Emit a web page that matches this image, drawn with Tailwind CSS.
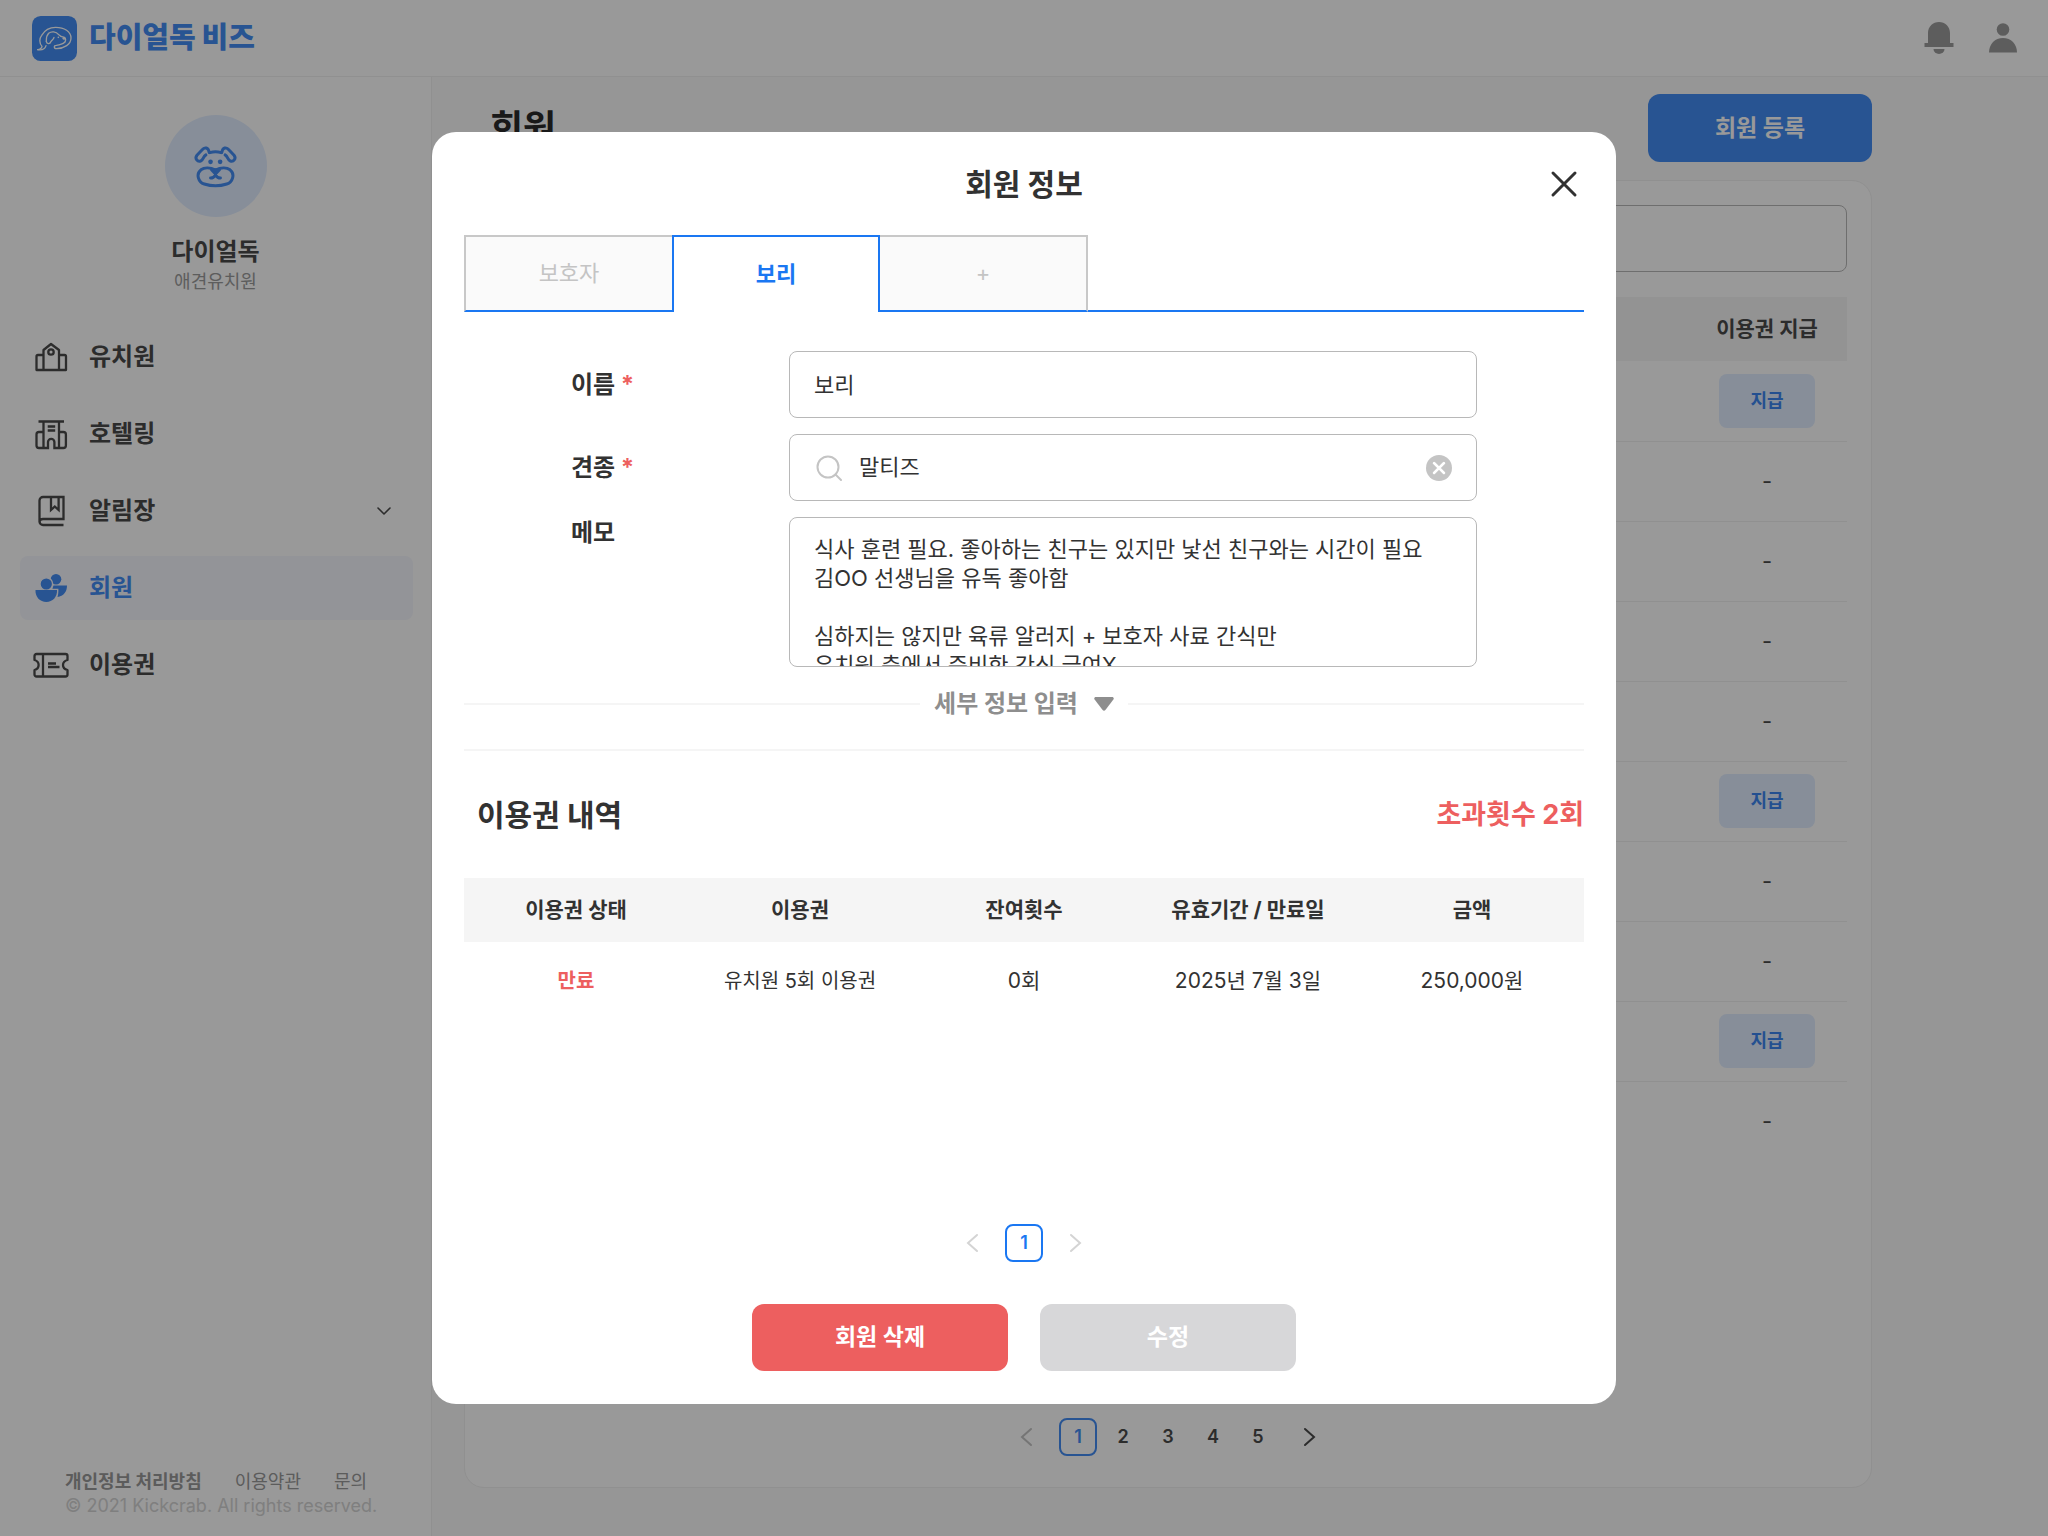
<!DOCTYPE html>
<html lang="ko">
  <head>
    <meta charset="UTF-8" />
    <meta name="viewport" content="width=device-width, initial-scale=1.0" />
    <title>다이얼독 비즈 - 회원</title>
    <script src="https://cdn.jsdelivr.net/npm/@tailwindcss/browser@4"></script>
  </head>
  <body
    class="min-h-screen flex flex-col bg-white text-[#4a4a4a] font-['Inter','Noto_Sans_CJK_KR',sans-serif]"
  >
    <!-- 상단 헤더 -->
    <header class="h-[77px] border-b border-[#f0f0f0] pl-8 pr-[29px] flex items-center justify-between">
      <a href="#" class="flex items-center gap-3">
        <svg class="size-[45px]" viewBox="0 0 135 135" fill="none">
          <rect width="135" height="135" rx="26" fill="#438cf3" />
          <g stroke="#fff" stroke-width="4" stroke-linecap="round" stroke-linejoin="round">
            <path d="M17 101c7-1 12-4 13-10-9-10-8-24-1-33C37 44 52 34 71 34c26 0 46 13 46 32 0 19-20 31-44 32-8 0-8-10 0-10 11-1 19-3 25-9" />
            <path d="M98 79c4-5 4-12-1-15-7-1-13-3-17-8-8-10-22-11-30-4-8 8-7 17-7 24" />
            <path d="M66 64c0 7-8 8-10 14-2 7-12 6-13-2M17 101c12 2 22-2 25-12" />
          </g>
          <circle cx="96" cy="67" r="4.500" fill="#fff" />
          <circle cx="79" cy="64" r="2.500" fill="#fff" />
        </svg>
        <span class="text-[29px] leading-8 font-black text-[#438cf3]">다이얼독 비즈</span>
      </a>
      <div class="flex items-center gap-8">
        <button type="button" aria-label="알림">
          <svg class="w-8 h-9" viewBox="0 0 32 36" fill="#9c9c9c">
            <path d="M5 23V13C5 6.500 10 2 16 2s11 4.500 11 11v10h3.500v4h-29v-4z" />
            <path d="M10.500 29h11a5.500 5 0 0 1-11 0z" />
          </svg>
        </button>
        <button type="button" aria-label="내 계정">
          <svg class="w-8 h-9" viewBox="0 0 32 36" fill="#9c9c9c">
            <circle cx="16" cy="9.500" r="6.300" />
            <path d="M2 32.500C2 24 8 18 16 18s14 6 14 14.500z" />
          </svg>
        </button>
      </div>
    </header>

    <div class="flex-1 flex">
      <!-- 사이드바 -->
      <aside class="w-[432px] shrink-0 border-r border-[#f0f0f0] pt-[38px] pb-[18px] flex flex-col">
        <div class="flex flex-col items-center">
          <div class="size-[102px] rounded-full bg-[#e1edff] flex items-center justify-center">
            <svg class="size-[45px]" viewBox="0 0 136 136" fill="none" stroke="#438cf3" stroke-width="9" stroke-linecap="round" stroke-linejoin="round">
              <path d="M51 26c12-4 22-4 34 0" />
              <path d="M49 26c-2-16-14-18-22-8L12 34C4 44 14 56 24 51c8-4 6-13 15-18" />
              <path d="M87 26c2-16 14-18 22-8l15 16c8 10-2 22-12 17-8-4-6-13-15-18" />
              <path d="M68 79C52 71 34 71 24 78 8 91 16 115 34 121c22 7 46 7 68 0 18-6 26-30 10-43-10-7-28-7-44 1z" />
              <path d="M56 78h24L68 91z" fill="#438cf3" />
              <path d="M68 87v7M53 103c7 0 11-3 15-9 4 6 8 9 15 9" />
              <g fill="#438cf3" stroke="none">
                <circle cx="53" cy="54" r="7" />
                <circle cx="82" cy="54" r="7" />
              </g>
            </svg>
          </div>
          <p class="mt-[19px] text-2xl font-bold">다이얼독</p>
          <p class="mt-0.5 text-lg leading-6 text-[#9c9c9c]">애견유치원</p>
        </div>

        <nav class="mt-[31px] pl-5 pr-[18px] flex flex-col gap-[13px] text-2xl font-bold">
          <a href="#" class="h-16 rounded-lg pl-[13px] pr-[22px] flex items-center gap-5">
            <svg class="size-9" viewBox="0 0 36 36" fill="none" stroke="currentColor" stroke-width="2.300" stroke-linejoin="round">
              <path d="M10.500 31V11L18 5l8 6v20M10.500 16H5a1.500 1.500 0 0 0-1.500 1.500V31h29.500V17.500a1.500 1.500 0 0 0-1.500-1.500H26" />
              <circle cx="18" cy="13" r="2.700" />
            </svg>
            유치원
          </a>
          <a href="#" class="h-16 rounded-lg pl-[13px] pr-[22px] flex items-center gap-5">
            <svg class="size-9" viewBox="0 0 36 36" fill="none" stroke="currentColor" stroke-width="2.300">
              <path d="M5.500 5.500h25.500M10.500 5.500V32M26 5.500V32M10.500 16H6a2.500 2.500 0 0 0-2.500 2.500v11A2.500 2.500 0 0 0 6 32h9v-6a3.200 3.200 0 0 1 6.400 0v6h9a2.500 2.500 0 0 0 2.500-2.500v-11a2.500 2.500 0 0 0-2.500-2.500H26M14.700 10.500h7.500M14.700 14.500h7.500" />
            </svg>
            호텔링
          </a>
          <a href="#" class="h-16 rounded-lg pl-[13px] pr-[22px] flex items-center gap-5">
            <svg class="size-9" viewBox="0 0 36 36" fill="none" stroke="currentColor" stroke-width="2.300">
              <path d="M30.500 32H10a3.500 3.500 0 0 1-3.500-3.500V7.500A3.500 3.500 0 0 1 10 4h20.500v22H10a3.500 3 0 0 0-3.500 3M18 4v13l3.800-3.500 3.800 3.500V4" />
            </svg>
            알림장
            <svg class="ml-auto w-[14px] h-2" viewBox="0 0 14 8" fill="none" stroke="currentColor" stroke-width="1.600" stroke-linecap="round" stroke-linejoin="round">
              <path d="M1 1l6 6 6-6" />
            </svg>
          </a>
          <a href="#" class="h-16 rounded-lg pl-[13px] pr-[22px] flex items-center gap-5 bg-[#f5f7fe] text-[#438cf3]">
            <svg class="size-9" viewBox="0 0 36 36" fill="currentColor">
              <circle cx="23" cy="9.200" r="5.300" />
              <circle cx="13.300" cy="14" r="6.300" stroke="#f5f7fe" stroke-width="1.400" />
              <path d="M20.500 15.500H34c0 6.500-3.500 10.500-9.500 11.500.7-2.500 1-5 .9-8.300h-6z" />
              <path d="M2.500 20H24c.5 7-4.500 12-10.700 12S2 27 2.500 20z" />
            </svg>
            회원
          </a>
          <a href="#" class="h-16 rounded-lg pl-[13px] pr-[22px] flex items-center gap-5">
            <svg class="size-9" viewBox="0 0 36 36" fill="none" stroke="currentColor" stroke-width="2.300" stroke-linejoin="round">
              <path d="M3.500 7h29A2 2 0 0 1 34.500 9v4c-6 1.500-6 8.500 0 10v4.500a2 2 0 0 1-2 2h-29a2 2 0 0 1-2-2V23c5.500-1.500 5.500-8.500 0-10V9a2 2 0 0 1 2-2zM10 7v22.500M15 16.500h8M15 20h11.500" />
            </svg>
            이용권
          </a>
        </nav>

        <footer class="mt-auto pl-[65px]">
          <div class="flex gap-[33px] text-lg leading-6 text-[#999999]">
            <a href="#" class="font-bold">개인정보 처리방침</a>
            <a href="#">이용약관</a>
            <a href="#">문의</a>
          </div>
          <p class="text-lg leading-6 text-[#d4d4d4]">© 2021 Kickcrab. All rights reserved.</p>
        </footer>
      </aside>

      <!-- 회원 목록 -->
      <main class="flex-1 bg-[#fafafa] pl-8 pt-[17px] pb-12 flex flex-col">
        <div class="max-w-[1408px] flex items-center justify-between pl-[26px]">
          <h1 class="text-4xl font-bold text-[#2a2a2a]">회원</h1>
          <button type="button" class="w-56 h-[68px] rounded-xl bg-[#438cf3] text-white text-[23px] font-bold">
            회원 등록
          </button>
        </div>
        <section class="mt-[18px] flex-1 max-w-[1408px] rounded-[20px] border border-[#f0f0f0] bg-white px-6 pt-6 pb-[31px] flex flex-col">
          <input
            type="search"
            aria-label="회원 검색"
            class="w-full h-[67px] rounded-lg border border-[#b8b8b8] px-6 text-[22px]"
          />
          <table class="mt-[25px] w-full">
            <thead>
              <tr class="h-16 bg-[#f5f5f5] text-[21px]">
                <td></td>
                <th class="w-40 font-bold">이용권 지급</th>
              </tr>
            </thead>
            <tbody id="memberRows" class="text-center"></tbody>
          </table>
          <nav aria-label="회원 목록 페이지" class="mt-auto flex items-center justify-center gap-[7px] text-lg font-semibold">
            <button type="button" aria-label="이전" class="mr-[13px] text-[#c4c4c4]">
              <svg class="size-6" viewBox="0 0 24 24" fill="none" stroke="currentColor" stroke-width="2" stroke-linecap="round"><path d="M16 4l-9 8 9 8" /></svg>
            </button>
            <button type="button" class="size-[38px] rounded-lg border-2 border-[#438cf3] text-[#438cf3]">1</button>
            <button type="button" class="size-[38px]">2</button>
            <button type="button" class="size-[38px]">3</button>
            <button type="button" class="size-[38px]">4</button>
            <button type="button" class="size-[38px]">5</button>
            <button type="button" aria-label="다음" class="ml-[13px]">
              <svg class="size-6" viewBox="0 0 24 24" fill="none" stroke="currentColor" stroke-width="2" stroke-linecap="round"><path d="M8 4l9 8-9 8" /></svg>
            </button>
          </nav>
        </section>
      </main>
    </div>

    <!-- 회원 정보 모달 -->
    <div class="fixed inset-0 bg-black/40 flex items-center justify-center">
      <div
        role="dialog"
        aria-modal="true"
        aria-labelledby="modalTitle"
        class="w-[1184px] max-w-full rounded-3xl bg-white px-8 pt-8 pb-[33px] text-[#323232]"
      >
        <div class="grid grid-cols-[40px_1fr_40px] items-center">
          <h2 id="modalTitle" class="col-start-2 text-center text-[30px] leading-10 font-bold">회원 정보</h2>
          <button type="button" id="closeModal" aria-label="닫기" class="size-10 flex items-center justify-center">
            <svg class="size-7" viewBox="0 0 28 28" fill="none" stroke="currentColor" stroke-width="3" stroke-linecap="round"><path d="M3 3l22 22M25 3L3 25" /></svg>
          </button>
        </div>

        <!-- 탭 -->
        <div role="tablist" class="mt-[31px] h-[77px] flex text-[22px]">
          <button type="button" role="tab" class="w-52 bg-[#fafafa] border-t-2 border-l-2 border-[#c8c8c8] border-b-2 border-b-[#1a77f2] text-[#c4c4c4]">보호자</button>
          <button type="button" role="tab" aria-selected="true" class="w-52 border-t-2 border-x-2 border-[#1a77f2] font-bold text-[#1a77f2]">보리</button>
          <button type="button" role="tab" aria-label="추가" class="w-52 bg-[#fafafa] border-t-2 border-r-2 border-[#c8c8c8] border-b-2 border-b-[#1a77f2] text-[#c4c4c4]">+</button>
          <div class="flex-1 border-b-2 border-[#1a77f2]"></div>
        </div>

        <!-- 기본 정보 -->
        <form class="mt-[39px] px-[107px] grid grid-cols-[218px_1fr] gap-y-4 text-[22px]">
          <label for="dogName" class="self-center text-2xl font-bold">이름 <span class="text-[#ed5f5f]">*</span></label>
          <input id="dogName" type="text" value="보리" class="w-full h-[67px] rounded-lg border border-[#b8b8b8] px-6 pb-1" />

          <label for="dogBreed" class="self-center text-2xl font-bold">견종 <span class="text-[#ed5f5f]">*</span></label>
          <div class="h-[67px] rounded-lg border border-[#b8b8b8] pl-[26px] pr-6 flex items-center gap-[17px]">
            <svg class="size-[26px] shrink-0" viewBox="0 0 26 26" fill="none" stroke="#c4c4c4" stroke-width="2" stroke-linecap="round">
              <circle cx="12" cy="12" r="10.500" />
              <path d="M19.500 19.500L25 25" />
            </svg>
            <input id="dogBreed" type="text" value="말티즈" class="flex-1 min-w-0 outline-none" />
            <button type="button" aria-label="지우기">
              <svg class="size-[26px]" viewBox="0 0 24 24">
                <circle cx="12" cy="12" r="12" fill="#c4c4c4" />
                <path d="M7.500 7.500l9 9M16.500 7.500l-9 9" stroke="#fff" stroke-width="2.600" stroke-linecap="round" />
              </svg>
            </button>
          </div>

          <label for="memo" class="text-2xl font-bold">메모</label>
          <textarea id="memo" class="block w-full h-[150px] rounded-lg border border-[#b8b8b8] px-6 pt-[17px] leading-[29px] resize-none overflow-hidden">식사 훈련 필요. 좋아하는 친구는 있지만 낯선 친구와는 시간이 필요
김OO 선생님을 유독 좋아함

심하지는 않지만 육류 알러지 + 보호자 사료 간식만
유치원 측에서 준비한 간식 급여X</textarea>
        </form>

        <div class="mt-[19px] flex items-center gap-[14px]">
          <div class="flex-1 h-0.5 bg-[#f5f5f5]"></div>
          <button type="button" class="h-9 flex items-center gap-4 text-2xl font-bold text-[#8e8e8e]">
            세부 정보 입력
            <svg class="w-5 h-[14px]" viewBox="0 0 20 14" fill="currentColor"><path d="M2 0h16c1.500 0 2.300 1.300 1.400 2.500l-8 10.600c-.7.900-2.100.900-2.800 0L.6 2.500C-.3 1.300.5 0 2 0z" /></svg>
          </button>
          <div class="flex-1 h-0.5 bg-[#f5f5f5]"></div>
        </div>
        <hr class="mt-[27px] border-t-2 border-[#f5f5f5]" />

        <!-- 이용권 내역 -->
        <div class="mt-[46px] h-9 flex items-center justify-between pl-[13px]">
          <h3 class="text-[30px] leading-9 font-bold">이용권 내역</h3>
          <p class="text-[27px] leading-9 font-bold text-[#ed5f5f]">초과횟수 2회</p>
        </div>
        <div class="mt-[45px] min-h-[328px]">
          <table class="w-full table-fixed text-center text-[21px]">
            <thead>
              <tr class="h-16 bg-[#f5f5f5]">
                <th class="font-bold">이용권 상태</th>
                <th class="font-bold">이용권</th>
                <th class="font-bold">잔여횟수</th>
                <th class="font-bold">유효기간 / 만료일</th>
                <th class="font-bold">금액</th>
              </tr>
            </thead>
            <tbody>
              <tr class="h-[78px]">
                <td class="text-xl font-bold text-[#ed5f5f]">만료</td>
                <td class="text-xl">유치원 5회 이용권</td>
                <td>0회</td>
                <td>2025년 7월 3일</td>
                <td>250,000원</td>
              </tr>
            </tbody>
          </table>
        </div>

        <nav aria-label="이용권 내역 페이지" class="mt-[18px] flex items-center justify-center gap-5 text-lg font-semibold text-[#d4d4d4]">
          <button type="button" aria-label="이전">
            <svg class="size-6" viewBox="0 0 24 24" fill="none" stroke="currentColor" stroke-width="2" stroke-linecap="round"><path d="M16 4l-9 8 9 8" /></svg>
          </button>
          <button type="button" class="size-[38px] rounded-lg border-2 border-[#1a77f2] text-[#1a77f2]">1</button>
          <button type="button" aria-label="다음">
            <svg class="size-6" viewBox="0 0 24 24" fill="none" stroke="currentColor" stroke-width="2" stroke-linecap="round"><path d="M8 4l9 8-9 8" /></svg>
          </button>
        </nav>

        <div class="mt-[42px] flex justify-center gap-8 text-[23px] font-bold text-white">
          <button type="button" class="w-64 h-[67px] rounded-xl bg-[#ed5f5f]">회원 삭제</button>
          <button type="button" class="w-64 h-[67px] rounded-xl bg-[#d7d7d9]">수정</button>
        </div>
      </div>
    </div>

    <script>
      // 이용권 지급 가능 여부
      const members = [true, false, false, false, false, true, false, false, true, false];

      document.getElementById("memberRows").innerHTML = members
        .map((canGive, i) => {
          const border = i < members.length - 1 ? "border-b border-[#f0f0f0]" : "";
          const cell = canGive
            ? `<button type="button" class="w-24 h-[54px] rounded-lg bg-[#e1edff] text-lg font-bold text-[#3d86f0]">지급</button>`
            : "-";
          return `<tr class="h-20 ${border}"><td></td><td class="text-[22px]">${cell}</td></tr>`;
        })
        .join("");
    </script>
  </body>
</html>
